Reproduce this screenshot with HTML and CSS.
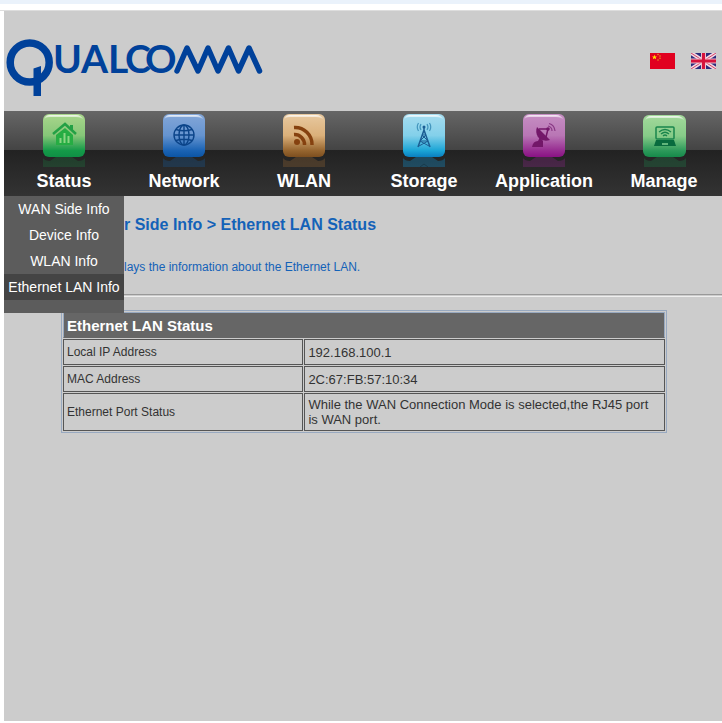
FILE: index.html
```html
<!DOCTYPE html>
<html lang="en">
<head>
<meta charset="utf-8">
<title>Ethernet LAN Status</title>
<link rel="stylesheet" href="styles.css">
</head>
<body>
<svg class="defs" width="0" height="0" aria-hidden="true">
  <defs>
    <linearGradient id="green" x2="0" y2="1"><stop offset="0" stop-color="#a9d68c"/><stop offset=".5" stop-color="#86c678"/><stop offset=".85" stop-color="#149a48"/><stop offset="1" stop-color="#0f8f45"/></linearGradient>
    <linearGradient id="blue" x2="0" y2="1"><stop offset="0" stop-color="#83a6d8"/><stop offset=".5" stop-color="#6594d0"/><stop offset=".85" stop-color="#1a63b4"/><stop offset="1" stop-color="#0c55a5"/></linearGradient>
    <linearGradient id="tan" x2="0" y2="1"><stop offset="0" stop-color="#e8c9a0"/><stop offset=".5" stop-color="#dbb07a"/><stop offset=".85" stop-color="#96652f"/><stop offset="1" stop-color="#7d4f1f"/></linearGradient>
    <linearGradient id="cyan" x2="0" y2="1"><stop offset="0" stop-color="#a6dcef"/><stop offset=".5" stop-color="#83d0ea"/><stop offset=".85" stop-color="#1ba5d6"/><stop offset="1" stop-color="#0a7fc0"/></linearGradient>
    <linearGradient id="purple" x2="0" y2="1"><stop offset="0" stop-color="#c68fc3"/><stop offset=".5" stop-color="#b976b5"/><stop offset=".85" stop-color="#972c91"/><stop offset="1" stop-color="#8a1284"/></linearGradient>
    <linearGradient id="mint" x2="0" y2="1"><stop offset="0" stop-color="#a3d99b"/><stop offset=".5" stop-color="#86cb88"/><stop offset=".85" stop-color="#2c995a"/><stop offset="1" stop-color="#168a4a"/></linearGradient>
    <linearGradient id="shine" x2="0" y2="1"><stop offset="0" stop-color="#fff" stop-opacity=".85"/><stop offset="1" stop-color="#fff" stop-opacity="0"/></linearGradient>
    <path id="gloss" d="M2 6Q3 1 8 1H34Q39 1 42 6Q39 3 34 3H8Q3 3 2 6Z" fill="url(#shine)"/>
    <path id="mirror" d="M1 53V44Q3 47 8 47L14 43H30L36 47Q41 47 43 44V53Z"/>
  </defs>
</svg>

<div class="page">
  <header class="header">
    <svg class="logo" width="262" height="60" viewBox="0 0 262 60" role="img" aria-label="QUALCOMM">
      <g fill="none" stroke="#00419a">
        <circle cx="25.700" cy="24.500" r="19.500" stroke-width="7.500"/>
        <path d="M29.500 30.500L37 28V58H29.500Z" fill="#00419a" stroke="none"/>
        <path d="M173 33L183 10L194 33L204 10L214 33L224.500 10L234.500 33L245 10L255.500 33" stroke-width="5.500" stroke-linejoin="round" stroke-linecap="round"/>
      </g>
      <text class="logo-text" y="35" x="49 77 104 121 141">UALCO</text>
    </svg>
    <div class="languages">
      <a href="#zh" aria-label="中文">
        <svg width="25" height="16" viewBox="0 0 25 16">
          <path fill="#e1001f" d="M0 0H25V16H0Z"/>
          <path fill="#ffe600" d="M4.500 1.800L5.200 3.400L7 3.500L5.700 4.600L6.100 6.200L4.500 5.300L2.900 6.200L3.300 4.600L2 3.500L3.800 3.400Z"/>
          <g fill="#e8941c"><circle cx="8" cy="1.500" r=".8"/><circle cx="10" cy="3" r=".8"/><circle cx="10" cy="5.200" r=".8"/><circle cx="8" cy="7" r=".8"/></g>
        </svg>
      </a>
      <a href="#en" aria-label="English">
        <svg width="25" height="16" viewBox="0 0 25 16">
          <path fill="#2d2b7c" d="M0 0H25V16H0Z"/>
          <path d="M0 0L25 16M25 0L0 16" stroke="#f3d9e2" stroke-width="4"/>
          <path d="M0 0L25 16M25 0L0 16" stroke="#d4446a" stroke-width="1"/>
          <path d="M12.500 0V16M0 8H25" stroke="#f0bccb" stroke-width="5"/>
          <path d="M12.500 0V16M0 8H25" stroke="#d6123c" stroke-width="3"/>
        </svg>
      </a>
    </div>
  </header>

  <nav class="nav" aria-label="Main">
    <div class="nav-item">
      <a class="nav-link" href="#status">
        <svg class="nav-icon" viewBox="1 0 43 53" aria-hidden="true">
          <rect x="1" width="42" height="43" rx="6" fill="url(#green)"/>
          <path d="M11 20L23 10L34 20" fill="none" stroke="#23a045" stroke-width="2.500"/>
          <path d="M28 11H31V17L28 14Z" fill="#23a045"/>
          <path d="M14 21L23 14L31 21V31H14Z" fill="#26ad43"/>
          <path d="M18.500 29V24M22.500 29V19M26.500 29V22" stroke="#8bd683" stroke-width="2"/>
          <use href="#gloss"/><use href="#mirror" fill="#168a45" opacity=".25"/>
        </svg>
        Status
      </a>
      <ul class="submenu">
        <li><a href="#wan">WAN Side Info</a></li>
        <li><a href="#device">Device Info</a></li>
        <li><a href="#wlan-info">WLAN Info</a></li>
        <li><a class="active" href="#lan" aria-current="page">Ethernet LAN Info</a></li>
      </ul>
    </div>
    <div class="nav-item">
      <a class="nav-link" href="#network">
        <svg class="nav-icon" viewBox="1 0 43 53" aria-hidden="true">
          <rect x="1" width="42" height="43" rx="6" fill="url(#blue)"/>
          <g fill="none" stroke="#0b4489" stroke-width="1.400"><circle cx="22" cy="21" r="10"/><ellipse cx="22" cy="21" rx="5" ry="10"/><path d="M22 11V31M12 21H32M14 15.500Q22 18 30 15.500M14 26.500Q22 24 30 26.500"/></g>
          <use href="#gloss"/><use href="#mirror" fill="#1760a8" opacity=".28"/>
        </svg>
        Network
      </a>
    </div>
    <div class="nav-item">
      <a class="nav-link" href="#wlan">
        <svg class="nav-icon" viewBox="1 0 43 53" aria-hidden="true">
          <rect x="1" width="42" height="43" rx="6" fill="url(#tan)"/>
          <circle cx="15" cy="28" r="3" fill="#85410f"/>
          <path d="M12 20.500A10 10 0 0 1 22.500 31M12 13.500A17 17 0 0 1 30 31" fill="none" stroke="#85410f" stroke-width="3.500"/>
          <use href="#gloss"/><use href="#mirror" fill="#9c6b34" opacity=".3"/>
        </svg>
        WLAN
      </a>
    </div>
    <div class="nav-item">
      <a class="nav-link" href="#storage">
        <svg class="nav-icon" viewBox="1 0 43 53" aria-hidden="true">
          <rect x="1" width="42" height="43" rx="6" fill="url(#cyan)"/>
          <g fill="none" stroke="#1b5d92" stroke-width="1.500"><path d="M22 12V16L16 33M22 16L28 33"/><path d="M20 21H24L18 27H26L17 32M20 21L26 27M18 27L27 32" stroke-width="1"/></g>
          <g fill="none" stroke="#4295bd" stroke-width="1.200"><path d="M19 10Q17 13 19 16M16.500 9Q14 13 16.500 17M25 10Q27 13 25 16M27.500 9Q30 13 27.500 17"/></g>
          <circle cx="22" cy="13" r="1.500" fill="#1b5d92"/>
          <use href="#gloss"/><use href="#mirror" fill="#1580b4" opacity=".4"/>
          <path d="M18 53L22 50L26 53" fill="none" stroke="#183b4c"/>
        </svg>
        Storage
      </a>
    </div>
    <div class="nav-item">
      <a class="nav-link" href="#application">
        <svg class="nav-icon" viewBox="1 0 43 53" aria-hidden="true">
          <rect x="1" width="42" height="43" rx="6" fill="url(#purple)"/>
          <path d="M15 13C12 21 18 29 28 26Z" fill="#731769"/>
          <path d="M17 15L26 15L24 23" fill="none" stroke="#731769" stroke-width="1.500"/>
          <circle cx="26" cy="15" r="1.800" fill="#731769"/>
          <path d="M10 33Q11 27 16 27L18 23L21 27V33Z" fill="#731769"/>
          <path d="M26 12Q30 13 30 17M27 9.500Q32.500 11 33 17" fill="none" stroke="#8a3a85" stroke-width="1.200"/>
          <use href="#gloss"/><use href="#mirror" fill="#8d2488" opacity=".32"/>
        </svg>
        Application
      </a>
    </div>
    <div class="nav-item">
      <a class="nav-link" href="#manage">
        <svg class="nav-icon" viewBox="0 0 43 53" aria-hidden="true">
          <rect y="1" width="43" height="42" rx="6" fill="url(#mint)"/>
          <rect x="13" y="13" width="18" height="12" rx="1" fill="none" stroke="#19854c" stroke-width="1.500"/>
          <path d="M13 26H31L33 32H11Z" fill="#086b3e"/><path d="M19 30H25" stroke="#7fcf91" stroke-width="1.500"/>
          <path d="M16 18Q22 13 28 18M18 20Q22 16.500 26 20M20 22Q22 20 24 22" fill="none" stroke="#19854c" stroke-width="1.300"/>
          <use href="#gloss" y="1"/><use href="#mirror" fill="#1d864b" opacity=".3"/>
        </svg>
        Manage
      </a>
    </div>
  </nav>

  <main class="content">
    <h1 class="title">r Side Info &gt; Ethernet LAN Status</h1>
    <p class="intro">lays the information about the Ethernet LAN.</p>
    <hr class="rule">
    <div class="table-wrap">
      <table class="status">
        <colgroup><col class="label-col"><col></colgroup>
        <thead><tr><th colspan="2" scope="colgroup">Ethernet LAN Status</th></tr></thead>
        <tbody>
          <tr><th scope="row">Local IP Address</th><td>192.168.100.1</td></tr>
          <tr><th scope="row">MAC Address</th><td>2C:67:FB:57:10:34</td></tr>
          <tr><th scope="row">Ethernet Port Status</th><td>While the WAN Connection Mode is selected,the RJ45 port is WAN port.</td></tr>
        </tbody>
      </table>
    </div>
  </main>
</div>
</body>
</html>
```
FILE: styles.css
```css
* {
  box-sizing: border-box;
}

body {
  margin: 0;
  border-top: 4px solid #eaf2fb;
  background: #fff;
  color: #333;
  font-family: "Liberation Sans", Arial, sans-serif;
}

body::before {
  content: "";
  display: block;
  height: 6px;
  border-bottom: 1px solid #ddd;
}

.defs {
  position: absolute;
}

.page {
  min-height: calc(100vh - 13px);
  margin-left: 4px;
  overflow: hidden;
  background: #ccc;
}

.header {
  display: flex;
  align-items: center;
  justify-content: space-between;
  height: 100px;
  padding-right: 6px;
}

.logo {
  margin-top: 14px;
}

.logo-text {
  fill: #00419a;
  font-family: Lato, "Liberation Sans", sans-serif;
  font-size: 39px;
  font-weight: 700;
}

.languages {
  display: flex;
  gap: 16px;
}

.languages svg {
  display: block;
}

.nav {
  display: grid;
  grid-template-columns: repeat(6, minmax(120px, 1fr));
  height: 85px;
  background: linear-gradient(#666, #444 39px, #222 39px, #333);
}

.nav-item {
  position: relative;
}

.nav-link {
  display: flex;
  flex-direction: column;
  align-items: center;
  gap: 4px;
  padding-top: 3px;
  color: #fff;
  font-size: 18px;
  font-weight: 700;
  line-height: 20px;
  text-decoration: none;
}

.nav-icon {
  display: block;
  width: 43px;
  height: 53px;
}

.submenu {
  position: absolute;
  top: 85px;
  left: 0;
  z-index: 1;
  width: 120px;
  margin: 0;
  padding: 0 0 13px;
  background: #5c5c5c;
  list-style: none;
}

.submenu a {
  display: block;
  color: #fff;
  font-size: 14px;
  line-height: 26px;
  text-align: center;
  text-decoration: none;
  white-space: nowrap;
}

.submenu .active {
  background: #444;
}

.content {
  padding-top: 19px;
}

.title {
  margin: 0 0 24px;
  padding-left: 120px;
  color: #1462b8;
  font-size: 16px;
  line-height: 20px;
}

.intro {
  margin: 0 0 18px;
  padding-left: 120px;
  color: #1462b8;
  font-size: 12px;
  line-height: 17px;
}

.rule {
  height: 3px;
  margin: 0;
  border: solid;
  border-width: 1px 0;
  border-color: #999 transparent #eee;
}

.table-wrap {
  padding: 13px 55px 0 57px;
}

.status {
  width: 100%;
  border: 1px solid #98a9c0;
  border-spacing: 1px;
  table-layout: fixed;
}

.label-col {
  width: 40%;
}

.status th,
.status td {
  height: 26px;
  padding: 3px;
  border: 1px solid #555;
  font-size: 13px;
  line-height: 15px;
  text-align: left;
}

.status tbody th {
  font-size: 12px;
  font-weight: 400;
}

.status thead th {
  border-color: #98a9c0 #98a9c0 #666;
  background: #666;
  color: #fff;
  font-size: 15px;
}
```
